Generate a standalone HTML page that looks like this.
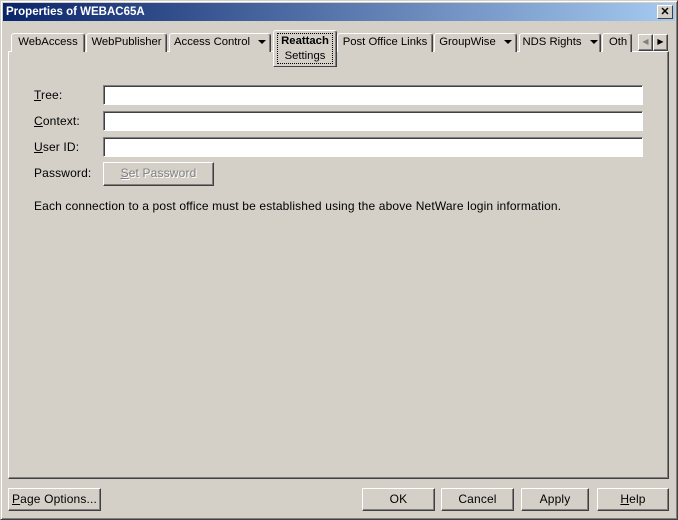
<!DOCTYPE html><html><head><style>
*{box-sizing:border-box}
body{margin:0;width:678px;height:520px;background:#d4d0c8;font:12px "Liberation Sans",sans-serif;letter-spacing:0.15px;color:#000;position:relative;overflow:hidden}
.a{position:absolute}
.win{left:0;top:0;width:678px;height:520px;border:1px solid;border-color:#d4d0c8 #404040 #404040 #d4d0c8;box-shadow:inset 1px 1px #fff,inset -1px -1px #808080}
.title{left:3px;top:3px;width:672px;height:18px;background:linear-gradient(90deg,#0a246a,#a6caf0);color:#fff;font-weight:bold;font-size:11.5px;line-height:18px;padding-left:3px;letter-spacing:0}
.xb{right:5px;top:5px;width:16px;height:14px;background:#d4d0c8;border:1px solid;border-color:#fff #404040 #404040 #fff;font-size:11px;line-height:12px;text-align:center;font-weight:bold;color:#000;letter-spacing:0}
.panel{left:8px;top:51px;width:661px;height:428px;border:1px solid;border-color:#fff #404040 #404040 #fff;box-shadow:inset -1px -1px #808080}
.tab{top:33px;height:19px;border:1px solid;border-bottom:none;border-color:#fff #404040 #404040 #fff;border-radius:3px 3px 0 0;box-shadow:inset -1px 0 #808080;line-height:17px;text-align:center;white-space:nowrap;background:#d4d0c8;letter-spacing:0;font-size:11.3px}
.sel{top:30px;height:37px;z-index:2;border-bottom:1px solid #404040}
.in{height:20px;background:#fff;border:1px solid;border-color:#808080 #fff #fff #808080;box-shadow:inset 1px 1px #404040}
.btn{height:23px;border:1px solid;border-color:#fff #404040 #404040 #fff;box-shadow:inset -1px -1px #808080;text-align:center;line-height:20px}
u{text-decoration:underline}
.tri{display:inline-block;width:0;height:0;border-left:4px solid transparent;border-right:4px solid transparent;border-top:4px solid #000;vertical-align:middle;margin-left:8px}
</style></head><body>
<div class="a win"></div>
<div class="a title">Properties of WEBAC65A</div>
<div class="a xb">✕</div>
<div class="a panel"></div>
<div class="a tab" style="left:11px;width:74px">WebAccess</div>
<div class="a tab" style="left:86px;width:81px">WebPublisher</div>
<div class="a tab" style="left:169px;width:102px">Access Control<span class="tri"></span></div>
<div class="a tab" style="left:337px;width:96px">Post Office Links</div>
<div class="a tab" style="left:434px;width:83px">GroupWise<span class="tri"></span></div>
<div class="a tab" style="left:519px;width:82px">NDS Rights<span class="tri"></span></div>
<div class="a tab" style="left:602px;width:30px;text-align:left;padding-left:6px;overflow:hidden">Oth</div>
<div class="a tab sel" style="left:273px;width:64px;line-height:15px;padding-top:2px"><div style="border:1px dotted #000;margin:0 3px;height:31px"><b>Reattach</b><br>Settings</div></div>
<div class="a btn" style="left:638px;top:34px;width:15px;height:17px;color:#808080;font-size:8px;line-height:14px">◀</div>
<div class="a btn" style="left:653px;top:34px;width:15px;height:17px;font-size:8px;line-height:14px">▶</div>
<div class="a" style="left:34px;top:88px"><u>T</u>ree:</div>
<div class="a" style="left:34px;top:114px"><u>C</u>ontext:</div>
<div class="a" style="left:34px;top:140px"><u>U</u>ser ID:</div>
<div class="a" style="left:34px;top:166px">Password:</div>
<div class="a in" style="left:103px;top:85px;width:540px"></div>
<div class="a in" style="left:103px;top:111px;width:540px"></div>
<div class="a in" style="left:103px;top:137px;width:540px"></div>
<div class="a btn" style="left:103px;top:162px;width:111px;height:24px;color:#808080;text-shadow:1px 1px #fff"><u>S</u>et Password</div>
<div class="a" style="left:34px;top:199px">Each connection to a post office must be established using the above NetWare login information.</div>
<div class="a btn" style="left:8px;top:488px;width:93px"><u>P</u>age Options...</div>
<div class="a btn" style="left:362px;top:488px;width:73px">OK</div>
<div class="a btn" style="left:441px;top:488px;width:73px">Cancel</div>
<div class="a btn" style="left:521px;top:488px;width:68px">Apply</div>
<div class="a btn" style="left:597px;top:488px;width:72px"><u>H</u>elp</div>
</body></html>
